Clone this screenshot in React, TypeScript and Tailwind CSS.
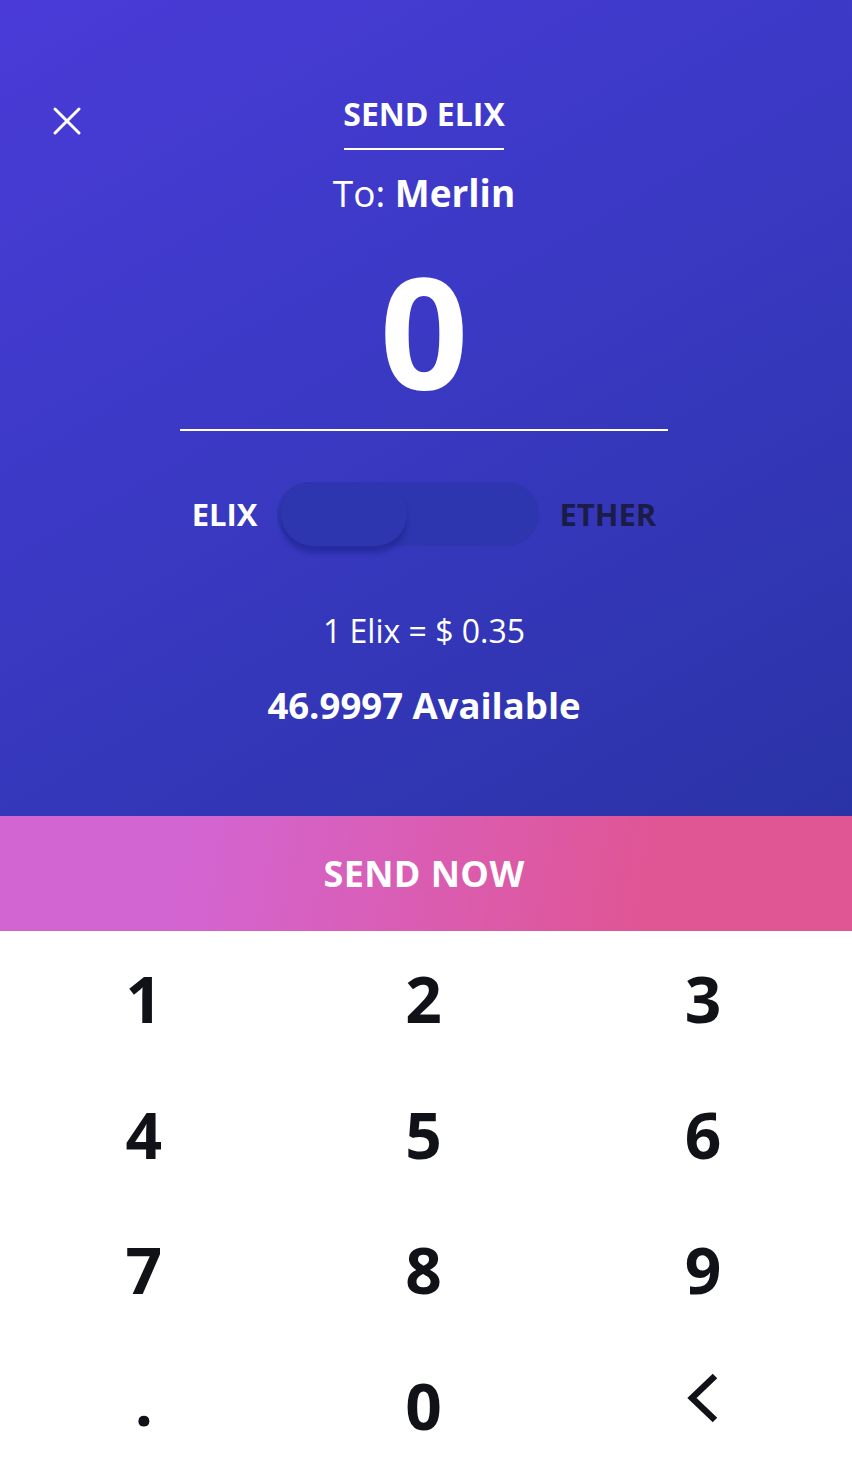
import React from "react";

const keys = ["1", "2", "3", "4", "5", "6", "7", "8", "9", ".", "0", "back"];

const CloseIcon = () => (
  <svg width="30" height="30" viewBox="0 0 30 30" fill="none">
    <path d="M3 3 L27 27 M27 3 L3 27" stroke="white" strokeWidth="3" strokeLinecap="round" />
  </svg>
);

const BackIcon = () => (
  <svg width="34" height="52" viewBox="0 0 34 52" fill="none">
    <polyline points="29,4 6,26 29,48" stroke="#111118" strokeWidth="6.5" strokeLinejoin="miter" />
  </svg>
);

export default function App() {
  return (
    <div className="w-[852px] h-[1478px] flex flex-col bg-white font-['Open_Sans',sans-serif] overflow-hidden">
      {/* header */}
      <section className="relative h-[816px] shrink-0 flex flex-col items-center pr-[4px] text-white bg-[linear-gradient(150deg,#4a3bd8_0%,#3a39c4_45%,#2a33a6_100%)]">
        <button className="absolute left-[52px] top-[106px]">
          <CloseIcon />
        </button>

        <h1 className="mt-[94px] text-[32px] leading-[40px] font-bold">SEND ELIX</h1>
        <div className="mt-[14px] w-[160px] h-[2px] bg-white" />

        <p className="mt-[21px] text-[37px] leading-[44px]">
          To: <span className="font-bold">Merlin</span>
        </p>

        <div className="mt-[36px] text-[155px] leading-none font-bold">0</div>
        <div className="mt-[23px] w-[488px] h-[2px] bg-white" />

        <div className="mt-[51px] flex items-center gap-[20px]">
          <span className="text-[31px] leading-[40px] font-bold">ELIX</span>
          <div className="relative w-[262px] h-[64px] rounded-full bg-[#2d36ae]">
            <div className="absolute left-[4px] top-0 w-[126px] h-[64px] rounded-full bg-[#2d36ae] shadow-[0_7px_5px_rgba(28,34,140,0.55)]" />
          </div>
          <span className="text-[31px] leading-[40px] font-bold text-[#1b1c48]">ETHER</span>
        </div>

        <p className="mt-[65px] text-[32px] leading-[40px]">1 Elix = $ 0.35</p>
        <p className="mt-[32px] text-[36.5px] leading-[44px] font-bold">46.9997 Available</p>
      </section>

      {/* action */}
      <button className="h-[115px] shrink-0 flex items-center justify-center pr-[4px] text-white text-[36px] font-bold tracking-[0.4px] bg-[linear-gradient(100deg,#d365d2_22%,#e05594_76%)]">
        SEND NOW
      </button>

      {/* keypad */}
      <div className="flex-1 grid grid-cols-3 grid-rows-4 pl-[4px] pr-[9px] pb-[4px] text-[#111118]">
        {keys.map((k) => (
          <div key={k} className="flex items-center justify-center">
            {k === "back" ? (
              <span className="-translate-y-[8px]">
                <BackIcon />
              </span>
            ) : k === "." ? (
              <span className="text-[64px] leading-none font-bold -translate-y-[4px]">.</span>
            ) : (
              <span className="text-[64px] leading-none font-bold">{k}</span>
            )}
          </div>
        ))}
      </div>
    </div>
  );
}
